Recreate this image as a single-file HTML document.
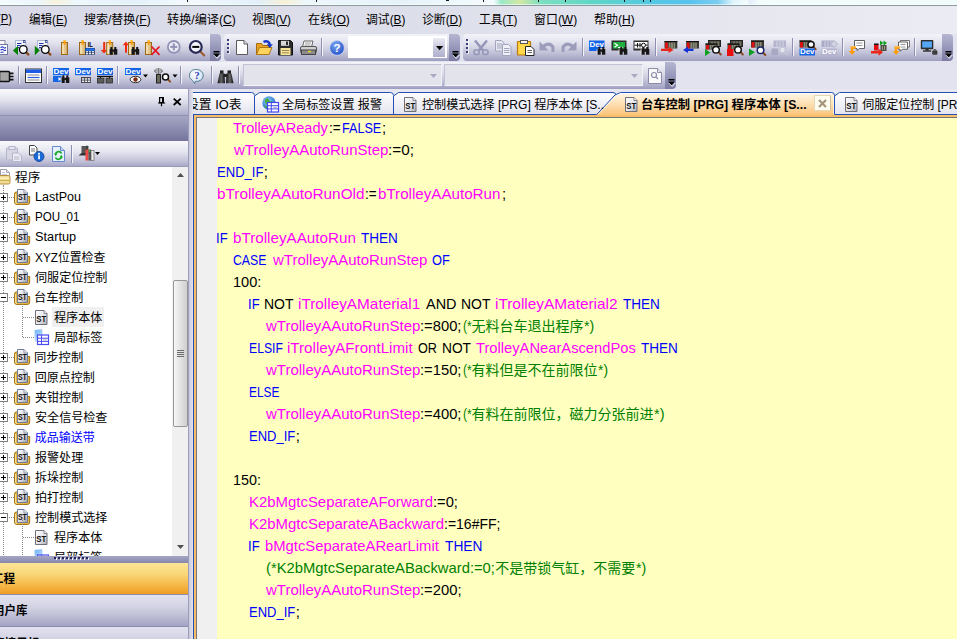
<!DOCTYPE html>
<html lang="zh-CN"><head><meta charset="utf-8"><title>GX Works2</title><style>
*{box-sizing:border-box}
html,body{margin:0;padding:0}
body{width:957px;height:639px;overflow:hidden;position:relative;background:#e3e3ef;font-family:"Liberation Sans","Noto Sans CJK SC",sans-serif;font-size:12px;color:#000}
.a{position:absolute}
.f,.t{position:absolute;white-space:pre;transform-origin:0 50%}
.t{line-height:22px;height:22px}
svg{position:absolute;overflow:visible}
.tb{position:absolute;height:27px;background:linear-gradient(#f3f3f9 0%,#e4e4ef 30%,#c9c9dd 62%,#a9a9c8 92%,#9c9cbd 100%)}
.opt{position:absolute;width:11px;height:27px;border-radius:0 4px 4px 0;background:linear-gradient(#b6b6d2,#9494b8 55%,#7c7ca4)}
.sep{position:absolute;width:2px;height:18px;border-left:1px solid #8f8fb1;border-right:1px solid #f4f4fa}
.grip{position:absolute;width:2px;height:14px;background:repeating-linear-gradient(#3c3c78 0 2px,transparent 2px 4px);box-shadow:1px 1px 0 rgba(255,255,255,.7)}
.lav{background:linear-gradient(#e3e3ef 0%,#cfcfe1 45%,#a4a4c4 100%)}
.row{position:absolute;left:0;height:20px;width:172px}
.pm{position:absolute;width:9px;height:9px;border:1px solid #808080;background:#fff}
.pm:before{content:"";position:absolute;left:1px;top:3px;width:5px;height:1px;background:#000}
.pm.p:after{content:"";position:absolute;left:3px;top:1px;width:1px;height:5px;background:#000}
.hd{position:absolute;height:0;border-top:1px dotted #8a8a8a}
.vd{position:absolute;width:0;border-left:1px dotted #8a8a8a}
</style></head><body>
<svg width="0" height="0" style="left:0;top:0"><defs><radialGradient id="hg" cx="0.4" cy="0.3" r="0.8"><stop offset="0" stop-color="#7aa6f2"/><stop offset="1" stop-color="#1a48c0"/></radialGradient><radialGradient id="hb" cx="0.4" cy="0.35" r="0.75"><stop offset="0" stop-color="#fff"/><stop offset="0.7" stop-color="#d6e6f8"/><stop offset="1" stop-color="#8fb0dc"/></radialGradient><linearGradient id="bg1" x1="0" x2="1"><stop offset="0" stop-color="#111"/><stop offset="0.5" stop-color="#666"/><stop offset="1" stop-color="#111"/></linearGradient><linearGradient id="sp" x1="0" y1="0" x2="1" y2="1"><stop offset="0" stop-color="#fff"/><stop offset="0.55" stop-color="#dedee4"/><stop offset="1" stop-color="#9c9ca6"/></linearGradient><linearGradient id="sd" x1="0" y1="0" x2="1" y2="1"><stop offset="0" stop-color="#fff"/><stop offset="0.6" stop-color="#e2e2e6"/><stop offset="1" stop-color="#a8a8b0"/></linearGradient><linearGradient id="lb" x1="0" y1="0" x2="0.600" y2="1"><stop offset="0" stop-color="#62b0f8"/><stop offset="1" stop-color="#cfe4fb"/></linearGradient><linearGradient id="tg" x1="0" y1="0" x2="0" y2="1"><stop offset="0" stop-color="#fefeff"/><stop offset="1" stop-color="#e4e4ef"/></linearGradient><linearGradient id="og" x1="0" y1="0" x2="0" y2="1"><stop offset="0" stop-color="#fff8ea"/><stop offset="0.45" stop-color="#fde0b4"/><stop offset="1" stop-color="#fbbf70"/></linearGradient><radialGradient id="gl" cx="0.4" cy="0.35" r="0.7"><stop offset="0" stop-color="#8fd0f8"/><stop offset="1" stop-color="#1a60c8"/></radialGradient></defs></svg>
<div class="a" style="left:0;top:0;width:957px;height:5px;background:linear-gradient(90deg,#f4fbfd 0,#ecf6fb 4%,#f6f2dc 5.800%,#eef7fc 8%,#e4f1fa 14%,#f3fafd 20%,#e2effa 27%,#f7f1d6 29.800%,#edf7fc 32%,#e6f2fa 42%,#f4fbfd 51.600%,#9be8c8 52.400%,#d3e8a4 54.300%,#7ddfc2 56.500%,#60d6c6 62%,#54c8e2 68%,#58c2ec 72%,#7acdf0 75%,#dff4fb 76.600%,#f2fcfc 78%,#e6ecf8 78.400%,#f1fcfc 79.200%,#f0fbfb 100%)"></div>
<div class="a" style="left:0;top:4px;width:957px;height:1px;background:rgba(255,255,255,.55)"></div>
<div class="a" style="left:187px;top:0;width:1.3px;height:1.5px;background:#10181c"></div>
<div class="a" style="left:316px;top:0;width:1.3px;height:2px;background:#10181c"></div>
<div class="a" style="left:445.5px;top:0;width:3px;height:1.3px;background:#10181c"></div>
<div class="a" style="left:483px;top:0;width:1.3px;height:2px;background:#10181c"></div>
<div class="a" style="left:538px;top:0;width:1.3px;height:2px;background:#10181c"></div>
<div class="a" style="left:565px;top:0;width:1.3px;height:2px;background:#10181c"></div>
<div class="a" style="left:624px;top:0;width:1.3px;height:2px;background:#10181c"></div>
<div class="a" style="left:643px;top:0;width:1.3px;height:2px;background:#10181c"></div>
<div class="a" style="left:650px;top:0;width:1.3px;height:2px;background:#10181c"></div>
<div class="a" style="left:0;top:5px;width:957px;height:1px;background:#8b9c9f"></div>
<div class="a" style="left:0;top:6px;width:957px;height:28px;background:linear-gradient(90deg,#dadae8 0%,#dddfea 45%,#e6e6f0 72%,#ebebf3 100%)"></div>
<span class="f" style="left:-2.60px;top:10.40px;font-size:12px;line-height:18px;color:#000;transform:scaleX(0.9375);">(<u>P</u>)</span>
<span class="f" style="left:29.30px;top:11.00px;font-size:12px;line-height:18px;color:#000;transform:scaleX(0.9600);">编辑(<u>E</u>)</span>
<span class="f" style="left:84.00px;top:11.00px;font-size:12px;line-height:18px;color:#000;">搜索/替换(<u>F</u>)</span>
<span class="f" style="left:166.70px;top:11.00px;font-size:12px;line-height:18px;color:#000;transform:scaleX(1.0133);">转换/编译(<u>C</u>)</span>
<span class="f" style="left:252.00px;top:11.00px;font-size:12px;line-height:18px;color:#000;transform:scaleX(0.9750);">视图(<u>V</u>)</span>
<span class="f" style="left:307.70px;top:11.00px;font-size:12px;line-height:18px;color:#000;transform:scaleX(1.0138);">在线(<u>O</u>)</span>
<span class="f" style="left:366.10px;top:11.00px;font-size:12px;line-height:18px;color:#000;transform:scaleX(0.9850);">调试(<u>B</u>)</span>
<span class="f" style="left:422.30px;top:11.00px;font-size:12px;line-height:18px;color:#000;transform:scaleX(0.9862);">诊断(<u>D</u>)</span>
<span class="f" style="left:479.30px;top:11.00px;font-size:12px;line-height:18px;color:#000;transform:scaleX(0.9739);">工具(<u>T</u>)</span>
<span class="f" style="left:534.40px;top:11.00px;font-size:12px;line-height:18px;color:#000;transform:scaleX(0.9949);">窗口(<u>W</u>)</span>
<span class="f" style="left:594.00px;top:11.00px;font-size:12px;line-height:18px;color:#000;">帮助(<u>H</u>)</span>
<div class="tb" style="left:0;top:34px;width:211px"></div>
<div class="opt" style="left:210px;top:34px"></div><svg style="left:212.5px;top:50px" width="8" height="9"><path d="M1.200 5.200l3 3.200l3.300-3.600" fill="none" stroke="#fff" stroke-width="1"/><rect x="0.500" y="1" width="6" height="1.500" fill="#000"/><path d="M0 3.600h7l-3.500 3.600z" fill="#000"/></svg>
<div class="tb" style="left:224px;top:34px;width:226px;border-radius:4px 0 0 4px"></div>
<div class="opt" style="left:449px;top:34px"></div><svg style="left:451.5px;top:50px" width="8" height="9"><path d="M1.200 5.200l3 3.200l3.300-3.600" fill="none" stroke="#fff" stroke-width="1"/><rect x="0.500" y="1" width="6" height="1.500" fill="#000"/><path d="M0 3.600h7l-3.500 3.600z" fill="#000"/></svg>
<div class="tb" style="left:463px;top:34px;width:480px;border-radius:4px 0 0 4px"></div>
<div class="opt" style="left:942px;top:34px"></div><svg style="left:944.5px;top:50px" width="8" height="9"><path d="M1.200 5.200l3 3.200l3.300-3.600" fill="none" stroke="#fff" stroke-width="1"/><rect x="0.500" y="1" width="6" height="1.500" fill="#000"/><path d="M0 3.600h7l-3.500 3.600z" fill="#000"/></svg>
<div class="grip" style="left:227px;top:39px"></div><div class="grip" style="left:466px;top:39px"></div>
<svg style="left:-8px;top:40px" width="16" height="16" viewBox="0 0 16 16" ><rect x="5.500" y="0.500" width="7.500" height="9" fill="#f8f8fc" stroke="#8a8aa0"/><rect x="7" y="4.500" width="8.500" height="10" fill="#fff" stroke="#7078a0"/><path d="M8.500 7.500q2-1.200 3 0t2.500 0M8.500 10q2-1.200 3 0t2.500 0M8.500 12.500q2-1 3 0" fill="none" stroke="#2838c8" stroke-width="1.100"/></svg>
<svg style="left:12px;top:40px" width="17" height="16" viewBox="0 0 17 16" ><path d="M3.500 0.500h8l2.300 2.300v5.700h-10.300z" fill="#f3f6fc" stroke="#a4aec8" stroke-width="0.900"/><rect x="11" y="0" width="2.500" height="3" fill="#3a4a8c"/><rect x="11.600" y="1" width="1.200" height="1.300" fill="#cfd8f0"/><rect x="5" y="3" width="4.500" height="1" fill="#2030a8"/><rect x="5" y="5" width="3.500" height="1" fill="#2030a8"/><rect x="5" y="7" width="2.500" height="1" fill="#2030a8"/><path d="M1 10.500l5-4.700v9.400z" fill="#008000"/><path d="M14 12.300l2.400 2.300" stroke="#8a4614" stroke-width="2.200" stroke-linecap="round"/><circle cx="11.300" cy="9.500" r="3.800" fill="#fff" stroke="#000" stroke-width="1.300"/></svg>
<svg style="left:34px;top:40px" width="17" height="16" viewBox="0 0 17 16" ><path d="M3.500 0.500h8l2.300 2.300v5.700h-10.300z" fill="#f3f6fc" stroke="#a4aec8" stroke-width="0.900"/><rect x="11" y="0" width="2.500" height="3" fill="#3a4a8c"/><rect x="11.600" y="1" width="1.200" height="1.300" fill="#cfd8f0"/><rect x="5" y="3" width="4.500" height="1" fill="#2030a8"/><rect x="5" y="5" width="3.500" height="1" fill="#2030a8"/><rect x="5" y="7" width="2.500" height="1" fill="#2030a8"/><path d="M5.800 10.500l-5-4.700v9.400z" fill="#008000"/><path d="M14 12.300l2.400 2.300" stroke="#8a4614" stroke-width="2.200" stroke-linecap="round"/><circle cx="11.300" cy="9.500" r="3.800" fill="#fff" stroke="#000" stroke-width="1.300"/></svg>
<svg style="left:60px;top:40px" width="8" height="16" viewBox="0 0 8 16" ><rect x="1.500" y="2.500" width="6" height="12" fill="#e4c88e" stroke="#9c6a16"/><rect x="2.200" y="3.200" width="1.600" height="10.600" fill="#f4e2b6"/><rect x="5.800" y="3.200" width="1" height="10.600" fill="#d0ac68"/><rect x="3.600" y="0" width="2" height="4.800" fill="#ff9a10"/><rect x="3.600" y="0" width="2" height="1.500" fill="#ffc428"/></svg>
<svg style="left:78px;top:40px" width="17" height="16" viewBox="0 0 17 16" ><rect x="1.500" y="2.500" width="6" height="12" fill="#e4c88e" stroke="#9c6a16"/><rect x="2.200" y="3.200" width="1.600" height="10.600" fill="#f4e2b6"/><rect x="5.800" y="3.200" width="1" height="10.600" fill="#d0ac68"/><rect x="3.600" y="0" width="2" height="4.800" fill="#ff9a10"/><rect x="3.600" y="0" width="2" height="1.500" fill="#ffc428"/><text x="12.300" y="6.800" text-anchor="middle" font-family="Liberation Sans,sans-serif" font-weight="bold" font-size="6.500" fill="#000" textLength="5.200" lengthAdjust="spacingAndGlyphs">IL</text><rect x="7" y="8" width="9.800" height="6.800" fill="#1e345c"/><rect x="7.500" y="8.400" width="8.800" height="2.400" fill="#1e74f4"/><rect x="7.800" y="11.200" width="2.200" height="1.200" fill="#fff"/><rect x="10.800" y="11.200" width="2.200" height="1.200" fill="#fff"/><rect x="13.800" y="11.200" width="2.200" height="1.200" fill="#fff"/><rect x="7.800" y="13.100" width="2.200" height="1.200" fill="#fff"/><rect x="10.800" y="13.100" width="2.200" height="1.200" fill="#fff"/><rect x="13.800" y="13.100" width="2.200" height="1.200" fill="#fff"/></svg>
<svg style="left:100px;top:40px" width="18" height="16" viewBox="0 0 18 16" ><rect x="3.200" y="2" width="2" height="9" fill="#f02c0c"/><path d="M0.800 10h6.400l-3.200 3.600z" fill="#f02c0c"/><g transform="translate(5.2 0)"><rect x="1.500" y="2.500" width="6" height="12" fill="#e4c88e" stroke="#9c6a16"/><rect x="2.200" y="3.200" width="1.600" height="10.600" fill="#f4e2b6"/><rect x="5.800" y="3.200" width="1" height="10.600" fill="#d0ac68"/><rect x="3.600" y="0" width="2" height="4.800" fill="#ff9a10"/><rect x="3.600" y="0" width="2" height="1.500" fill="#ffc428"/></g><g transform="translate(9.3 7)"><rect x="1" y="0" width="2" height="2.500" fill="#161616"/><rect x="5" y="0" width="2" height="2.500" fill="#161616"/><rect x="0" y="2" width="3.400" height="5.700" fill="#161616"/><rect x="4.600" y="2" width="3.400" height="5.700" fill="#161616"/><rect x="3" y="2.600" width="2" height="2.200" fill="#161616"/><rect x="-0.600" y="2" width="0.700" height="5.700" fill="#f4f0e4"/></g></svg>
<svg style="left:122px;top:40px" width="18" height="16" viewBox="0 0 18 16" ><rect x="3" y="4.500" width="2" height="8.200" fill="#f02c0c"/><path d="M0.800 5.200h6.200l-3.100-3.600z" fill="#f02c0c"/><g transform="translate(5 0)"><rect x="1.500" y="2.500" width="6" height="12" fill="#e4c88e" stroke="#9c6a16"/><rect x="2.200" y="3.200" width="1.600" height="10.600" fill="#f4e2b6"/><rect x="5.800" y="3.200" width="1" height="10.600" fill="#d0ac68"/><rect x="3.600" y="0" width="2" height="4.800" fill="#ff9a10"/><rect x="3.600" y="0" width="2" height="1.500" fill="#ffc428"/></g><g transform="translate(9.2 7)"><rect x="1" y="0" width="2" height="2.500" fill="#161616"/><rect x="5" y="0" width="2" height="2.500" fill="#161616"/><rect x="0" y="2" width="3.400" height="5.700" fill="#161616"/><rect x="4.600" y="2" width="3.400" height="5.700" fill="#161616"/><rect x="3" y="2.600" width="2" height="2.200" fill="#161616"/><rect x="-0.600" y="2" width="0.700" height="5.700" fill="#f4f0e4"/></g></svg>
<svg style="left:144px;top:40px" width="17" height="16" viewBox="0 0 17 16" ><rect x="1.500" y="2.500" width="6" height="12" fill="#e4c88e" stroke="#9c6a16"/><rect x="2.200" y="3.200" width="1.600" height="10.600" fill="#f4e2b6"/><rect x="5.800" y="3.200" width="1" height="10.600" fill="#d0ac68"/><rect x="3.600" y="0" width="2" height="4.800" fill="#ff9a10"/><rect x="3.600" y="0" width="2" height="1.500" fill="#ffc428"/><path d="M7.500 6.500l8 8.300M15.500 6.500l-8 8.300" stroke="#e6141e" stroke-width="1.700"/></svg>
<svg style="left:166px;top:40px" width="17" height="16" viewBox="0 0 17 16" ><path d="M12.300 11.500l4 4" stroke="#b8b8cc" stroke-width="2" stroke-linecap="round"/><circle cx="7.800" cy="6.900" r="5.900" fill="#ececf5" stroke="#9292b6" stroke-width="1.8"/><path d="M4.300 6.900h7" stroke="#9292b6" stroke-width="2"/><path d="M7.800 3.400v7" stroke="#9292b6" stroke-width="2"/></svg>
<svg style="left:188px;top:40px" width="17" height="16" viewBox="0 0 17 16" ><path d="M12.300 11.500l4 4" stroke="#9a5a28" stroke-width="2" stroke-linecap="round"/><circle cx="7.800" cy="6.900" r="5.900" fill="#f2f2f9" stroke="#2a2a58" stroke-width="2.2"/><path d="M4.300 6.900h7" stroke="#000" stroke-width="2"/></svg>
<svg style="left:236px;top:40px" width="13" height="16" viewBox="0 0 13 16" ><path d="M0.500 0.500h7.500l3.500 3.500v10.500h-11z" fill="#fff" stroke="#5a5a5a"/><path d="M8 0.500v3.500h3.500" fill="#ececec" stroke="#5a5a5a"/></svg>
<svg style="left:256px;top:40px" width="17" height="16" viewBox="0 0 17 16" ><path d="M0.5 14.5v-11h5l1.5 2h6v9z" fill="#e8a020" stroke="#a86c10"/><path d="M0.5 14.5l3-7h12.5l-3 7z" fill="#ffd45c" stroke="#b07810"/><path d="M7.500 1.800q5.500-2 6.300 3" fill="none" stroke="#1438c4" stroke-width="2.500"/><path d="M10.800 4.300h6l-3 3.700z" fill="#1438c4"/></svg>
<svg style="left:278px;top:40px" width="15" height="16" viewBox="0 0 15 16" ><path d="M0.5 0.5h12l2 2v12.5h-14z" fill="#2c2c2c" stroke="#111"/><rect x="3" y="0.8" width="8" height="5" fill="#d8d8d8"/><rect x="8" y="1.5" width="2" height="3.5" fill="#2c2c2c"/><rect x="2.5" y="8" width="10" height="7" fill="#f6e49a"/><path d="M4 10.5h7M4 12.8h7" stroke="#9a8a50"/></svg>
<svg style="left:300px;top:40px" width="17" height="16" viewBox="0 0 17 16" ><path d="M4 1h9l-1.5 6h-9z" fill="#fff" stroke="#666"/><path d="M5 3h6M4.5 5h6" stroke="#999"/><rect x="0.5" y="6.5" width="16" height="6.5" rx="1.5" fill="#cfcfcf" stroke="#555"/><rect x="1.5" y="10" width="14" height="4.5" fill="#8c8c8c" stroke="#444"/><rect x="8" y="10.8" width="3" height="1.4" fill="#f0e020"/></svg>
<div class="sep" style="left:321px;top:38px"></div>
<svg style="left:329px;top:40px" width="16" height="16" viewBox="0 0 16 16" ><circle cx="8" cy="8" r="7.4" fill="url(#hg)" stroke="#c9d6f2" stroke-width="1"/><text x="8" y="12.2" text-anchor="middle" font-family="Liberation Sans,sans-serif" font-weight="bold" font-size="11.5" fill="#fff">?</text></svg>
<div class="a" style="left:348px;top:36px;width:98.500px;height:22px;background:#fff"></div>
<div class="a" style="left:433px;top:37.5px;width:12px;height:19.500px;background:linear-gradient(#ececf4,#c8c8de 50%,#b0b0ce)"></div>
<svg style="left:436px;top:45.5px" width="7" height="5"><path d="M0 0h7.200l-3.600 4.300z" fill="#000"/></svg>
<svg style="left:472.5px;top:40px" width="16" height="16" viewBox="0 0 16 16" ><path d="M2 0.5l8.5 10.5M14 0.5l-8.5 10.5" stroke="#9696b8" stroke-width="2.500"/><rect x="1" y="10" width="5.2" height="4.5" rx="1.6" fill="none" stroke="#9696b8" stroke-width="1.6"/><rect x="9.8" y="10" width="5.2" height="4.5" rx="1.6" fill="none" stroke="#9696b8" stroke-width="1.6"/></svg>
<svg style="left:495px;top:40px" width="17" height="16" viewBox="0 0 17 16" ><path d="M0.5 0.5h6l2.5 2.5v8h-8.500z" fill="#e8e8f2" stroke="#a4a4c0"/><path d="M2 4h5M2 6h5M2 8h5" stroke="#a4a4c0"/><path d="M7.5 4.500h6l2.500 2.500v8.500h-8.500z" fill="#f0f0f7" stroke="#a4a4c0"/><path d="M9 8.500h5.500M9 10.500h5.500M9 12.500h5.500" stroke="#a4a4c0"/></svg>
<svg style="left:517px;top:40px" width="18" height="16" viewBox="0 0 18 16" ><rect x="0.5" y="1.500" width="13" height="13.500" rx="0.500" fill="#ffc830" stroke="#b87a0c" stroke-width="1.200"/><rect x="1.500" y="2.500" width="11" height="11.500" fill="#ffd84c"/><rect x="3.500" y="0.5" width="7" height="3" fill="#f4f4f4" stroke="#555"/><path d="M8.500 6.500h5.500l3 3v6h-8.500z" fill="#fff" stroke="#222"/><path d="M10.500 10.500h4.500M10.500 12.500h4.500" stroke="#555" stroke-width="0.900"/></svg>
<svg style="left:539px;top:40px" width="17" height="16" viewBox="0 0 17 16" ><path d="M0.5 1.500v9h9l-3.300-3.300q3.500-3 6.200 0.300v4.500h3.100v-5.500q-4.500-7-11.700-1.700z" fill="#9d9dbb"/></svg>
<svg style="left:560px;top:40px" width="17" height="16" viewBox="0 0 17 16" ><g transform="translate(17 0) scale(-1 1)"><path d="M0.5 1.500v9h9l-3.300-3.300q3.500-3 6.200 0.300v4.500h3.100v-5.500q-4.500-7-11.700-1.700z" fill="#9d9dbb"/></g></svg>
<div class="sep" style="left:582px;top:38px"></div>
<svg style="left:589px;top:40px" width="18" height="16" viewBox="0 0 18 16" ><rect x="0" y="0.5" width="15.5" height="7.5" fill="#1464e6"/><text x="7.75" y="6.8" font-family="Liberation Sans,sans-serif" font-weight="bold" font-size="7" text-anchor="middle" fill="#fff" textLength="14.5" lengthAdjust="spacingAndGlyphs">Dev</text><rect x="0" y="8" width="9" height="3" fill="#1464e6"/><g transform="translate(8.3 7)"><rect x="1" y="0" width="2" height="2.500" fill="#161616"/><rect x="5" y="0" width="2" height="2.500" fill="#161616"/><rect x="0" y="2" width="3.400" height="5.700" fill="#161616"/><rect x="4.600" y="2" width="3.400" height="5.700" fill="#161616"/><rect x="3" y="2.600" width="2" height="2.200" fill="#161616"/><rect x="-0.600" y="2" width="0.700" height="5.700" fill="#f4f0e4"/></g></svg>
<svg style="left:611px;top:40px" width="18" height="16" viewBox="0 0 18 16" ><rect x="0.5" y="0.5" width="15" height="10" fill="#2e2e2e"/><rect x="2" y="2" width="12" height="6.500" fill="#20b040"/><path d="M3.500 3.300l3 2l-3 2" fill="none" stroke="#fff" stroke-width="1.200"/><path d="M7 7.500h5" stroke="#fff" stroke-width="1.200"/><g transform="translate(8.3 7)"><rect x="1" y="0" width="2" height="2.500" fill="#161616"/><rect x="5" y="0" width="2" height="2.500" fill="#161616"/><rect x="0" y="2" width="3.400" height="5.700" fill="#161616"/><rect x="4.600" y="2" width="3.400" height="5.700" fill="#161616"/><rect x="3" y="2.600" width="2" height="2.200" fill="#161616"/><rect x="-0.600" y="2" width="0.700" height="5.700" fill="#f4f0e4"/></g></svg>
<svg style="left:633px;top:40px" width="18" height="16" viewBox="0 0 18 16" ><rect x="0.5" y="0.5" width="15" height="10" fill="#2e2e2e"/><rect x="1.500" y="2" width="13" height="6.500" fill="#fff"/><path d="M1.500 5.200h13M4.500 3v4.500M7 3v4.500" stroke="#111" stroke-width="1"/><circle cx="10.500" cy="5.200" r="2" fill="#fff" stroke="#111"/><g transform="translate(8.3 7)"><rect x="1" y="0" width="2" height="2.500" fill="#161616"/><rect x="5" y="0" width="2" height="2.500" fill="#161616"/><rect x="0" y="2" width="3.400" height="5.700" fill="#161616"/><rect x="4.600" y="2" width="3.400" height="5.700" fill="#161616"/><rect x="3" y="2.600" width="2" height="2.200" fill="#161616"/><rect x="-0.600" y="2" width="0.700" height="5.700" fill="#f4f0e4"/></g></svg>
<div class="sep" style="left:655px;top:38px"></div>
<svg style="left:662px;top:40px" width="17" height="16" viewBox="0 0 17 16" ><rect x="2.5" y="1" width="12.8" height="7.5" fill="#3c3c34"/><rect x="2.5" y="1" width="12.8" height="1.2" fill="#111"/><rect x="3.1" y="2.5" width="2.8" height="6.0" fill="#e01010"/><rect x="6.7" y="2.5" width="1.8" height="5.7" fill="#8a8a78"/><rect x="9.1" y="2.5" width="1.8" height="5.7" fill="#8a8a78"/><rect x="11.5" y="2.5" width="1.6" height="5.7" fill="#8a8a78"/><path d="M-1 8.700h7.500v-2l5 3.200l-5 3.200v-2h-7.500z" fill="#e8281a"/></svg>
<svg style="left:684px;top:40px" width="17" height="16" viewBox="0 0 17 16" ><rect x="2.2" y="1" width="12.8" height="7.5" fill="#3c3c34"/><rect x="2.2" y="1" width="12.8" height="1.2" fill="#111"/><rect x="2.8000000000000003" y="2.5" width="2.8" height="6.0" fill="#e01010"/><rect x="6.4" y="2.5" width="1.8" height="5.7" fill="#8a8a78"/><rect x="8.8" y="2.5" width="1.8" height="5.7" fill="#8a8a78"/><rect x="11.2" y="2.5" width="1.6" height="5.7" fill="#8a8a78"/><path d="M9.500 8.700h-5.500v-2l-5 3.200l5 3.200v-2h5.500z" fill="#1432d8"/></svg>
<svg style="left:705px;top:40px" width="17" height="16" viewBox="0 0 17 16" ><rect x="3.500" y="0.5" width="12" height="6" fill="#4a4a40" stroke="#222"/><path d="M7 1.500v4.500M10 1.500v4.500M13 1.500v4.500" stroke="#9a9a88"/><rect x="0.5" y="3.5" width="12" height="6" fill="#3c3c34"/><rect x="0.5" y="3.5" width="12" height="1.2" fill="#111"/><rect x="1.1" y="5.0" width="2.8" height="4.5" fill="#e01010"/><rect x="4.7" y="5.0" width="1.8" height="4.2" fill="#8a8a78"/><rect x="7.1" y="5.0" width="1.8" height="4.2" fill="#8a8a78"/><rect x="9.5" y="5.0" width="1.6" height="4.2" fill="#8a8a78"/><path d="M0 9l5.500 3.500l-5.500 3.500z" fill="#10a020"/><path d="M13.309999999999999 12.009999999999998l2.5 2.5" stroke="#8a4a1c" stroke-width="2" stroke-linecap="round"/><circle cx="11" cy="9.7" r="3.3" fill="#fff" stroke="#101010" stroke-width="1.5"/></svg>
<svg style="left:727px;top:40px" width="17" height="16" viewBox="0 0 17 16" ><rect x="3.500" y="0.5" width="12" height="6" fill="#4a4a40" stroke="#222"/><path d="M7 1.500v4.500M10 1.500v4.500M13 1.500v4.500" stroke="#9a9a88"/><rect x="0.5" y="3.5" width="12" height="6" fill="#3c3c34"/><rect x="0.5" y="3.5" width="12" height="1.2" fill="#111"/><rect x="1.1" y="5.0" width="2.8" height="4.5" fill="#e01010"/><rect x="4.7" y="5.0" width="1.8" height="4.2" fill="#8a8a78"/><rect x="7.1" y="5.0" width="1.8" height="4.2" fill="#8a8a78"/><rect x="9.5" y="5.0" width="1.6" height="4.2" fill="#8a8a78"/><rect x="0" y="9" width="6.500" height="7" fill="#e81010"/><path d="M13.309999999999999 12.009999999999998l2.5 2.5" stroke="#8a4a1c" stroke-width="2" stroke-linecap="round"/><circle cx="11" cy="9.7" r="3.3" fill="#fff" stroke="#101010" stroke-width="1.5"/></svg>
<svg style="left:749px;top:40px" width="17" height="16" viewBox="0 0 17 16" ><rect x="2" y="0.5" width="13" height="7" fill="#3c3c34"/><rect x="2" y="0.5" width="13" height="1.2" fill="#111"/><rect x="2.6" y="2.0" width="2.8" height="5.5" fill="#e01010"/><rect x="6.2" y="2.0" width="1.8" height="5.2" fill="#8a8a78"/><rect x="8.6" y="2.0" width="1.8" height="5.2" fill="#8a8a78"/><rect x="11" y="2.0" width="1.6" height="5.2" fill="#8a8a78"/><path d="M0 8.500l6 3.700l-6 3.800z" fill="#10a020"/><path d="M13.809999999999999 12.509999999999998l2.5 2.5" stroke="#8a4a1c" stroke-width="2" stroke-linecap="round"/><circle cx="11.5" cy="10.2" r="3.3" fill="#fff" stroke="#1a2868" stroke-width="1.5"/></svg>
<svg style="left:771px;top:40px" width="17" height="16" viewBox="0 0 17 16" ><rect x="2.500" y="0.5" width="12.500" height="6.500" fill="#b4b4cc"/><path d="M6 1v6M9 1v6M12 1v6" stroke="#d8d8e6"/><rect x="0.5" y="8.500" width="6.500" height="6.500" fill="#a8a8c2"/><path d="M13.6 12.1l2.5 2.5" stroke="#c4c4d6" stroke-width="2" stroke-linecap="round"/><circle cx="11.5" cy="10" r="3" fill="#e6e6f0" stroke="#c4c4d6" stroke-width="1.5"/></svg>
<div class="sep" style="left:792px;top:38px"></div>
<svg style="left:799px;top:40px" width="17" height="16" viewBox="0 0 17 16" ><rect x="0.5" y="0.5" width="12" height="7" fill="#3c3c34"/><rect x="0.5" y="0.5" width="12" height="1.2" fill="#111"/><rect x="1.1" y="2.0" width="2.8" height="5.5" fill="#e01010"/><rect x="4.7" y="2.0" width="1.8" height="5.2" fill="#8a8a78"/><rect x="7.1" y="2.0" width="1.8" height="5.2" fill="#8a8a78"/><rect x="9.5" y="2.0" width="1.6" height="5.2" fill="#8a8a78"/><path d="M14.17 6.67l2.5 2.5" stroke="#8a4a1c" stroke-width="2" stroke-linecap="round"/><circle cx="12" cy="4.5" r="3.1" fill="#fff" stroke="#101010" stroke-width="1.5"/><rect x="0.5" y="8.5" width="15.5" height="7" fill="#1464e6"/><text x="8.25" y="14.3" font-family="Liberation Sans,sans-serif" font-weight="bold" font-size="7" text-anchor="middle" fill="#fff" textLength="14.5" lengthAdjust="spacingAndGlyphs">Dev</text></svg>
<svg style="left:821px;top:40px" width="17" height="16" viewBox="0 0 17 16" ><rect x="0.500" y="0.500" width="12" height="6.500" fill="#acacc8"/><path d="M4 1v6M7 1v6M10 1v6" stroke="#d0d0e0"/><path d="M9.500 4l3.500-3.500l3.500 3.500l-3.500 3.500z" fill="#d4d4e2" stroke="#b0b0ca"/><rect x="0.5" y="8.5" width="15.5" height="7" fill="#b2b2ce"/><text x="8.25" y="14.3" font-family="Liberation Sans,sans-serif" font-weight="bold" font-size="7" text-anchor="middle" fill="#fff" textLength="14.5" lengthAdjust="spacingAndGlyphs">Dev</text></svg>
<div class="sep" style="left:842px;top:38px"></div>
<svg style="left:849px;top:40px" width="17" height="16" viewBox="0 0 17 16" ><path d="M5.500 0.5h10v8.0h-5l-2.500 2v-2h-2.5z" fill="#fff" stroke="#505050" stroke-width="0.900"/><path d="M7.500 3h6M7.500 5.5h6" stroke="#8a8a8a" stroke-width="0.900"/><path d="M1.500 6.200h5.300v2.600h-2.600v2.300h2.200l-3.300 3.800l-3.300-3.800h2.200z" fill="#ff9c0c"/><path d="M2.200 6.900h3.800" stroke="#ffd060" stroke-width="0.800"/></svg>
<svg style="left:871px;top:40px" width="17" height="16" viewBox="0 0 17 16" ><rect x="3" y="4" width="4.500" height="6.500" fill="#e01010"/><rect x="3" y="3.500" width="4.500" height="1.500" fill="#111"/><rect x="9.500" y="5" width="6" height="6" fill="#4a4a40"/><path d="M11.500 6v4M13.500 6v4" stroke="#9a9a88"/><path d="M9 0.5l3.500 2.500l-3.500 2.500zM12.500 0.5l3.500 2.500l-3.500 2.500z" fill="#10a020"/><path d="M0 11h7.500v-2.300l4.500 3.500l-4.500 3.500v-2.300h-7.500z" fill="#e8281a"/></svg>
<svg style="left:893px;top:40px" width="17" height="16" viewBox="0 0 17 16" ><path d="M7.500 0.500h9v6.500h-9z" fill="#fff" stroke="#666" stroke-width="0.900"/><path d="M5.500 2.0h9v7.25h-5l-2.500 2v-2h-1.5z" fill="#fff" stroke="#505050" stroke-width="0.900"/><path d="M7.500 4.5h5M7.500 7.0h5" stroke="#8a8a8a" stroke-width="0.900"/><path d="M1.500 6.200h5.300v2.600h-2.600v2.300h2.200l-3.300 3.800l-3.300-3.800h2.200z" fill="#ff9c0c"/><path d="M2.200 6.900h3.800" stroke="#ffd060" stroke-width="0.800"/></svg>
<div class="sep" style="left:914px;top:38px"></div>
<svg style="left:920px;top:40px" width="19" height="16" viewBox="0 0 19 16" ><rect x="0.800" y="0" width="12.500" height="9.200" rx="0.800" fill="#2c2c2c"/><rect x="2.200" y="1.400" width="9.700" height="6.200" fill="#56a6f6"/><rect x="5.600" y="9" width="3" height="1.600" fill="#2c2c2c"/><rect x="3" y="10.300" width="8.200" height="1.400" fill="#2c2c2c"/><rect x="12.200" y="10.600" width="5.200" height="4.200" rx="1" fill="#3c3c3c"/><path d="M13.300 10.800q1.500-2.600 3 0" fill="none" stroke="#3c3c3c" stroke-width="1.100"/></svg>
<div class="tb" style="left:0;top:62px;width:666px;height:27px"></div>
<div class="opt" style="left:665px;top:62px"></div><svg style="left:667.5px;top:78px" width="8" height="9"><path d="M1.200 5.200l3 3.200l3.300-3.600" fill="none" stroke="#fff" stroke-width="1"/><rect x="0.500" y="1" width="6" height="1.500" fill="#000"/><path d="M0 3.600h7l-3.500 3.600z" fill="#000"/></svg>
<svg style="left:-1px;top:69px" width="16" height="16" viewBox="0 0 16 16" ><rect x="0.500" y="2.500" width="10" height="10" rx="1" fill="#a6a6a6" stroke="#111" stroke-width="1.500"/><path d="M11 4.300h3.500M11 7.500h3.500M11 10.700h3.500" stroke="#111" stroke-width="1.700"/></svg>
<div class="sep" style="left:18px;top:66px"></div>
<svg style="left:25px;top:68px" width="17" height="16" viewBox="0 0 17 16" ><rect x="0.5" y="1" width="16" height="13.500" fill="#fff" stroke="#333"/><rect x="1" y="1.500" width="15" height="3.500" fill="#1c5ce8"/><path d="M2.500 7h12M2.500 12h12" stroke="#888" stroke-width="1"/><path d="M2.500 9.500h12" stroke="#2a5ce0" stroke-width="1.200"/></svg>
<div class="sep" style="left:46px;top:66px"></div>
<svg style="left:53px;top:68px" width="17" height="16" viewBox="0 0 17 16" ><rect x="0" y="0" width="16" height="7.2" fill="#1464e6"/><text x="8.0" y="6.0" font-family="Liberation Sans,sans-serif" font-weight="bold" font-size="7" text-anchor="middle" fill="#fff" textLength="15" lengthAdjust="spacingAndGlyphs">Dev</text><rect x="0" y="8" width="8.500" height="6" fill="#1464e6"/><path d="M5.500 9l2.800 2l-2.800 2z" fill="#fff"/><g transform="translate(8.3 7.3)"><rect x="1" y="0" width="2" height="2.500" fill="#161616"/><rect x="5" y="0" width="2" height="2.500" fill="#161616"/><rect x="0" y="2" width="3.400" height="5.700" fill="#161616"/><rect x="4.600" y="2" width="3.400" height="5.700" fill="#161616"/><rect x="3" y="2.600" width="2" height="2.200" fill="#161616"/><rect x="-0.600" y="2" width="0.700" height="5.700" fill="#f4f0e4"/></g></svg>
<svg style="left:75px;top:68px" width="17" height="16" viewBox="0 0 17 16" ><rect x="0" y="0" width="16" height="7.2" fill="#1464e6"/><text x="8.0" y="6.0" font-family="Liberation Sans,sans-serif" font-weight="bold" font-size="7" text-anchor="middle" fill="#fff" textLength="15" lengthAdjust="spacingAndGlyphs">Dev</text><rect x="6" y="9" width="10" height="6" fill="#484854"/><rect x="7" y="10.300" width="2.200" height="1.300" fill="#fff"/><rect x="10" y="10.300" width="2.200" height="1.300" fill="#fff"/><rect x="13" y="10.300" width="2.200" height="1.300" fill="#fff"/><rect x="7" y="12.600" width="2.200" height="1.300" fill="#fff"/><rect x="10" y="12.600" width="2.200" height="1.300" fill="#fff"/><rect x="13" y="12.600" width="2.200" height="1.300" fill="#fff"/></svg>
<svg style="left:97px;top:68px" width="17" height="16" viewBox="0 0 17 16" ><rect x="0" y="0" width="16" height="7.2" fill="#1464e6"/><text x="8.0" y="6.0" font-family="Liberation Sans,sans-serif" font-weight="bold" font-size="7" text-anchor="middle" fill="#fff" textLength="15" lengthAdjust="spacingAndGlyphs">Dev</text><path d="M0 8.500h16" stroke="#111" stroke-width="1.300"/><path d="M3.500 8.500v2M12.500 8.500v2" stroke="#111" stroke-width="1.200"/><rect x="0.500" y="10.200" width="6.500" height="4.800" fill="#5e5e5e" stroke="#2a2a2a" stroke-width="0.800"/><rect x="9" y="10.200" width="6.500" height="4.800" fill="#5e5e5e" stroke="#2a2a2a" stroke-width="0.800"/></svg>
<div class="sep" style="left:117px;top:66px"></div>
<svg style="left:125px;top:68px" width="24" height="16" viewBox="0 0 24 16" ><rect x="0" y="0" width="16" height="7" fill="#1464e6"/><text x="8.0" y="5.8" font-family="Liberation Sans,sans-serif" font-weight="bold" font-size="7" text-anchor="middle" fill="#fff" textLength="15" lengthAdjust="spacingAndGlyphs">Dev</text><ellipse cx="10.500" cy="11.500" rx="5.300" ry="3.200" fill="#fff" stroke="#222"/><circle cx="10.500" cy="11.500" r="2.200" fill="#7a2c14"/><path d="M18 6.500h5l-2.500 3z" fill="#000"/></svg>
<svg style="left:153px;top:68px" width="26" height="16" viewBox="0 0 26 16" ><ellipse cx="5.500" cy="3" rx="3.800" ry="2.200" fill="none" stroke="#666" stroke-width="0.800"/><path d="M5.500 0v7M1 3h9" stroke="#666" stroke-width="0.800"/><rect x="3.500" y="6.500" width="4" height="8.500" fill="#6a6a5c" stroke="#222"/><path d="M14.6 11.1l2.5 2.5" stroke="#8a4a1c" stroke-width="2" stroke-linecap="round"/><circle cx="12.5" cy="9" r="3" fill="#fff" stroke="#101010" stroke-width="1.5"/><path d="M19.500 6.500h5l-2.500 3z" fill="#000"/></svg>
<div class="sep" style="left:180px;top:66px"></div>
<svg style="left:189px;top:68.5px" width="16" height="15" viewBox="0 0 18 17" ><path d="M8.500 0.5a7.800 6.800 0 1 1-1.500 13.500l-0.500 2.500l-2.800-3.600a7.800 6.800 0 0 1 4.800-12.400z" fill="url(#hb)" stroke="#3a6a7c" stroke-width="0.900"/><text x="9" y="11.500" text-anchor="middle" font-family="Liberation Serif,serif" font-weight="bold" font-size="11.500" fill="#2030b0">?</text></svg>
<div class="sep" style="left:211px;top:66px"></div>
<svg style="left:217px;top:69.5px" width="17" height="14" viewBox="0 0 17 16" preserveAspectRatio="none"><rect x="3" y="0.5" width="3.500" height="5" fill="#222"/><rect x="10.500" y="0.5" width="3.500" height="5" fill="#222"/><path d="M2.500 4h5l0.500 11h-7.500z" fill="url(#bg1)"/><path d="M9.500 4h5l2 11h-7.500z" fill="url(#bg1)"/><rect x="6.500" y="4.500" width="4" height="3.500" fill="#222"/></svg>
<div class="sep" style="left:238px;top:66px"></div>
<div class="a" style="left:243px;top:64px;width:199px;height:22px;background:#e3e3ec;border:1px solid #c2c2d6;border-right-color:#f2f2f8;border-bottom-color:#f4f4fa"></div>
<svg style="left:430px;top:74px" width="7" height="4"><path d="M0 0h7l-3.5 4z" fill="#a9a9c4"/></svg>
<div class="a" style="left:444px;top:64px;width:199px;height:22px;background:#e3e3ec;border:1px solid #c2c2d6;border-right-color:#f2f2f8;border-bottom-color:#f4f4fa"></div>
<svg style="left:631px;top:74px" width="7" height="4"><path d="M0 0h7l-3.5 4z" fill="#a9a9c4"/></svg>
<svg style="left:648px;top:68px" width="15" height="16" viewBox="0 0 15 16" ><path d="M0.5 0.5h9l4 4v11h-13z" fill="#fafafc" stroke="#8c8ca8"/><path d="M9.500 0.5v4h4" fill="#e4e4ee" stroke="#8c8ca8"/><circle cx="6" cy="7" r="2.500" fill="none" stroke="#8c8ca8" stroke-width="1.200"/><path d="M8 9l2 2" stroke="#8c8ca8" stroke-width="1.300"/></svg>
<div class="a" style="left:0;top:89px;width:189px;height:27px;background:linear-gradient(#fafafd 0%,#e4e4ef 40%,#a9a9c7 100%)"></div>
<div class="a" style="left:0;top:115px;width:189px;height:1px;background:#8f8fb0"></div>
<div class="a" style="left:0;top:116px;width:189px;height:25px;background:linear-gradient(#a6a6c4 0%,#9090b4 45%,#74749c 100%)"></div>
<div class="a" style="left:0;top:141px;width:189px;height:26px;border-radius:0 0 4px 0;background:linear-gradient(#f8f8fc 0%,#e6e6f0 40%,#c4c4da 75%,#a4a4c4 100%)"></div>
<div class="a" style="left:0;top:166px;width:189px;height:1px;background:#9a9aba"></div>
<svg style="left:158px;top:97px" width="8" height="10" viewBox="0 0 8 10" ><rect x="1.600" y="0.600" width="3.800" height="5" fill="none" stroke="#000" stroke-width="1.200"/><rect x="4" y="0.600" width="1.800" height="5" fill="#000"/><path d="M0 6h7.200M3.500 6v3.200" stroke="#000" stroke-width="1.200"/></svg>
<svg style="left:173px;top:97.5px" width="9" height="8" viewBox="0 0 9 8" ><path d="M0.700 0.600l7 6.400M7.700 0.600l-7 6.400" stroke="#000" stroke-width="1.700"/></svg>
<svg style="left:6px;top:146px" width="17" height="16" viewBox="0 0 17 16" ><rect x="0.5" y="2" width="11" height="12" rx="1" fill="#d6d6e4" stroke="#b4b4ca"/><rect x="3" y="0.5" width="6" height="3" fill="#e8e8f0" stroke="#b4b4ca"/><path d="M6.500 7h6l3 3v5.500h-9z" fill="#ececf4" stroke="#b4b4ca"/><path d="M8 11h5.500M8 13h5.500" stroke="#b4b4ca"/></svg>
<svg style="left:28px;top:145px" width="17" height="17" viewBox="0 0 17 17" ><path d="M1.500 0.5h5l2.500 2.500v7h-7.500z" fill="#fff" stroke="#444"/><path d="M3 4h4M3 6h4" stroke="#777"/><circle cx="11" cy="11.500" r="5" fill="#1a6ad8" stroke="#0c3c90" stroke-width="0.800"/><circle cx="11" cy="8.800" r="1" fill="#fff"/><rect x="10.200" y="10.300" width="1.700" height="4" fill="#fff"/></svg>
<svg style="left:52px;top:146px" width="13" height="16" viewBox="0 0 13 16" ><path d="M0.500 0.500h8l4 4v11h-12z" fill="#e6f0fc" stroke="#6a8ad0"/><path d="M8.500 0.500v4h4" fill="#c4d8f4" stroke="#6a8ad0"/><path d="M9.500 7.500a3.200 3.200 0 0 0-6 0.500" fill="none" stroke="#18a828" stroke-width="1.800"/><path d="M2 7.500h3.500l-1.800 2.800z" fill="#18a828"/><path d="M3.500 11.500a3.200 3.200 0 0 0 6-0.500" fill="none" stroke="#18a828" stroke-width="1.800"/><path d="M11 11.500h-3.500l1.800-2.800z" fill="#18a828"/></svg>
<div class="sep" style="left:71px;top:145px"></div>
<svg style="left:78px;top:145px" width="17" height="17" viewBox="0 0 17 17" ><path d="M3.500 1h7v7.500h-7z" fill="#555"/><path d="M0.500 10.500l3-2.500h7l-1 2.500z" fill="#333"/><rect x="7.500" y="4.500" width="3" height="11" fill="#f04848"/><rect x="10.500" y="4.500" width="2.500" height="11" fill="#555"/><rect x="13" y="5.500" width="3" height="10" fill="#e8e8e8" stroke="#555" stroke-width="0.600"/><rect x="11" y="5.500" width="1.300" height="1.300" fill="#30e030"/><path d="M9 0.500v4" stroke="#333"/></svg>
<svg style="left:95px;top:152px" width="5" height="3"><path d="M0 0h5l-2.5 3z" fill="#000"/></svg>
<div class="a" style="left:0;top:167px;width:189px;height:389px;background:#fff;overflow:hidden" id="tree">
<div class="vd" style="left:3px;top:18px;height:380px"></div>
<svg style="left:-6px;top:1px" width="18" height="18" viewBox="0 0 18 18" ><path d="M6.500 1.500h6l3 3v7h-9z" fill="#fff" stroke="#9a9aaa"/><path d="M12.500 1.500v3h3" fill="#dcdce6" stroke="#9a9aaa" stroke-width="0.800"/><path d="M8 4.500h3M8 6.500h5" stroke="#b8bed4" stroke-width="0.900"/><rect x="2.500" y="7.500" width="13.500" height="8.500" rx="1.500" fill="#f0dc94" stroke="#b8923a"/><rect x="3.500" y="9.500" width="11.500" height="1.300" fill="#fff4c4"/><rect x="3.500" y="12" width="11.500" height="1" fill="#d0b054"/></svg>
<span class="f" style="left:15.10px;top:1.60px;font-size:12px;line-height:18px;color:#000;transform:scaleX(1.0542);">程序</span>
<div class="pm p" style="left:-1px;top:26px"></div>
<div class="hd" style="left:9px;top:30px;width:5px"></div>
<svg style="left:14px;top:21px" width="17" height="18" viewBox="0 0 17 18" ><path d="M0.500 6q0-2 2-2h1v9.500h10v-5h2.200v5.500q0 2.500-2.500 2.500h-10.200q-2.500 0-2.500-2.500z" fill="#e6b548" stroke="#a67514"/><path d="M1.500 6v8q0 1.500 1.500 1.500" fill="none" stroke="#f8e09a"/><path d="M3.500 1.500h6.500l3.500 3.500v9.500h-10z" fill="url(#sp)" stroke="#6c7c98"/><path d="M10 1.500v3.500h3.500" fill="#f6f6f8" stroke="#6c7c98" stroke-width="0.800"/><text x="8.400" y="12.300" text-anchor="middle" font-family="Liberation Sans,sans-serif" font-weight="bold" font-size="8.500" fill="#111" textLength="9" lengthAdjust="spacingAndGlyphs">ST</text></svg>
<span class="f" style="left:34.70px;top:20.50px;font-size:12px;line-height:18px;color:#000;transform:scaleX(1.0425);">LastPou</span>
<div class="pm p" style="left:-1px;top:46px"></div>
<div class="hd" style="left:9px;top:50px;width:5px"></div>
<svg style="left:14px;top:41px" width="17" height="18" viewBox="0 0 17 18" ><path d="M0.500 6q0-2 2-2h1v9.500h10v-5h2.200v5.500q0 2.500-2.500 2.500h-10.200q-2.500 0-2.500-2.500z" fill="#e6b548" stroke="#a67514"/><path d="M1.500 6v8q0 1.500 1.500 1.500" fill="none" stroke="#f8e09a"/><path d="M3.500 1.500h6.500l3.500 3.500v9.500h-10z" fill="url(#sp)" stroke="#6c7c98"/><path d="M10 1.500v3.500h3.500" fill="#f6f6f8" stroke="#6c7c98" stroke-width="0.800"/><text x="8.400" y="12.300" text-anchor="middle" font-family="Liberation Sans,sans-serif" font-weight="bold" font-size="8.500" fill="#111" textLength="9" lengthAdjust="spacingAndGlyphs">ST</text></svg>
<span class="f" style="left:35.10px;top:40.50px;font-size:12px;line-height:18px;color:#000;transform:scaleX(0.9665);">POU_01</span>
<div class="pm p" style="left:-1px;top:66px"></div>
<div class="hd" style="left:9px;top:70px;width:5px"></div>
<svg style="left:14px;top:61px" width="17" height="18" viewBox="0 0 17 18" ><path d="M0.500 6q0-2 2-2h1v9.500h10v-5h2.200v5.500q0 2.500-2.500 2.500h-10.200q-2.500 0-2.500-2.500z" fill="#e6b548" stroke="#a67514"/><path d="M1.500 6v8q0 1.500 1.500 1.500" fill="none" stroke="#f8e09a"/><path d="M3.500 1.500h6.500l3.500 3.500v9.500h-10z" fill="url(#sp)" stroke="#6c7c98"/><path d="M10 1.500v3.500h3.500" fill="#f6f6f8" stroke="#6c7c98" stroke-width="0.800"/><text x="8.400" y="12.300" text-anchor="middle" font-family="Liberation Sans,sans-serif" font-weight="bold" font-size="8.500" fill="#111" textLength="9" lengthAdjust="spacingAndGlyphs">ST</text></svg>
<span class="f" style="left:34.90px;top:60.50px;font-size:12px;line-height:18px;color:#000;transform:scaleX(1.0637);">Startup</span>
<div class="pm p" style="left:-1px;top:86px"></div>
<div class="hd" style="left:9px;top:90px;width:5px"></div>
<svg style="left:14px;top:81px" width="17" height="18" viewBox="0 0 17 18" ><path d="M0.500 6q0-2 2-2h1v9.500h10v-5h2.200v5.500q0 2.500-2.500 2.500h-10.200q-2.500 0-2.500-2.500z" fill="#e6b548" stroke="#a67514"/><path d="M1.500 6v8q0 1.500 1.500 1.500" fill="none" stroke="#f8e09a"/><path d="M3.500 1.500h6.500l3.500 3.500v9.500h-10z" fill="url(#sp)" stroke="#6c7c98"/><path d="M10 1.500v3.500h3.500" fill="#f6f6f8" stroke="#6c7c98" stroke-width="0.800"/><text x="8.400" y="12.300" text-anchor="middle" font-family="Liberation Sans,sans-serif" font-weight="bold" font-size="8.500" fill="#111" textLength="9" lengthAdjust="spacingAndGlyphs">ST</text></svg>
<span class="f" style="left:34.70px;top:81.60px;font-size:12px;line-height:18px;color:#000;transform:scaleX(0.9840);">XYZ位置检查</span>
<div class="pm p" style="left:-1px;top:106px"></div>
<div class="hd" style="left:9px;top:110px;width:5px"></div>
<svg style="left:14px;top:101px" width="17" height="18" viewBox="0 0 17 18" ><path d="M0.500 6q0-2 2-2h1v9.500h10v-5h2.200v5.500q0 2.500-2.500 2.500h-10.200q-2.500 0-2.500-2.500z" fill="#e6b548" stroke="#a67514"/><path d="M1.500 6v8q0 1.500 1.500 1.500" fill="none" stroke="#f8e09a"/><path d="M3.500 1.500h6.500l3.500 3.500v9.500h-10z" fill="url(#sp)" stroke="#6c7c98"/><path d="M10 1.500v3.500h3.500" fill="#f6f6f8" stroke="#6c7c98" stroke-width="0.800"/><text x="8.400" y="12.300" text-anchor="middle" font-family="Liberation Sans,sans-serif" font-weight="bold" font-size="8.500" fill="#111" textLength="9" lengthAdjust="spacingAndGlyphs">ST</text></svg>
<span class="f" style="left:34.70px;top:101.60px;font-size:12px;line-height:18px;color:#000;transform:scaleX(1.0055);">伺服定位控制</span>
<div class="pm " style="left:-1px;top:126px"></div>
<div class="hd" style="left:9px;top:130px;width:5px"></div>
<svg style="left:14px;top:121px" width="17" height="18" viewBox="0 0 17 18" ><path d="M0.500 6q0-2 2-2h1v9.500h10v-5h2.200v5.500q0 2.500-2.500 2.500h-10.200q-2.500 0-2.500-2.500z" fill="#e6b548" stroke="#a67514"/><path d="M1.500 6v8q0 1.500 1.500 1.500" fill="none" stroke="#f8e09a"/><path d="M3.500 1.500h6.500l3.500 3.500v9.500h-10z" fill="url(#sp)" stroke="#6c7c98"/><path d="M10 1.500v3.500h3.500" fill="#f6f6f8" stroke="#6c7c98" stroke-width="0.800"/><text x="8.400" y="12.300" text-anchor="middle" font-family="Liberation Sans,sans-serif" font-weight="bold" font-size="8.500" fill="#111" textLength="9" lengthAdjust="spacingAndGlyphs">ST</text></svg>
<span class="f" style="left:33.67px;top:121.60px;font-size:12px;line-height:18px;color:#000;transform:scaleX(1.0255);">台车控制</span>
<div class="hd" style="left:23px;top:150px;width:11px"></div>
<svg style="left:35px;top:143px" width="13" height="15" viewBox="0 0 13 15" ><path d="M0.500 0.500h8.500l3 3v11h-11.500z" fill="url(#sd)" stroke="#70707a"/><path d="M9 0.500v3h3" fill="#f4f4f6" stroke="#70707a" stroke-width="0.800"/><text x="6.200" y="11.800" text-anchor="middle" font-family="Liberation Sans,sans-serif" font-weight="bold" font-size="9.500" fill="#111" textLength="10" lengthAdjust="spacingAndGlyphs">ST</text></svg>
<div class="a" style="left:52px;top:140px;width:52px;height:20px;background:#f0f0f0"></div>
<span class="f" style="left:53.70px;top:141.60px;font-size:12px;line-height:18px;color:#000;transform:scaleX(1.0062);">程序本体</span>
<div class="hd" style="left:23px;top:170px;width:11px"></div>
<svg style="left:33px;top:162px" width="17" height="17" viewBox="0 0 17 17" ><path d="M1.500 1l7.500-1l1 11l-8 1.500z" fill="url(#lb)" stroke="#d4e2f4" stroke-width="0.600"/><rect x="4.500" y="6" width="11" height="9.500" fill="#fff" stroke="#4a4cf0" stroke-width="1.200"/><path d="M4.500 9.200h11M4.500 12.400h11M8.500 6v9.500" stroke="#4a4cf0" stroke-width="1"/><path d="M10 10.800h4" stroke="#9a9aa8" stroke-width="0.800"/></svg>
<span class="f" style="left:53.70px;top:161.60px;font-size:12px;line-height:18px;color:#000;transform:scaleX(1.0062);">局部标签</span>
<div class="pm p" style="left:-1px;top:186px"></div>
<div class="hd" style="left:9px;top:190px;width:5px"></div>
<svg style="left:14px;top:181px" width="17" height="18" viewBox="0 0 17 18" ><path d="M0.500 6q0-2 2-2h1v9.500h10v-5h2.200v5.500q0 2.500-2.500 2.500h-10.200q-2.500 0-2.500-2.500z" fill="#e6b548" stroke="#a67514"/><path d="M1.500 6v8q0 1.500 1.500 1.500" fill="none" stroke="#f8e09a"/><path d="M3.500 1.500h6.500l3.500 3.500v9.500h-10z" fill="url(#sp)" stroke="#6c7c98"/><path d="M10 1.500v3.500h3.500" fill="#f6f6f8" stroke="#6c7c98" stroke-width="0.800"/><text x="8.400" y="12.300" text-anchor="middle" font-family="Liberation Sans,sans-serif" font-weight="bold" font-size="8.500" fill="#111" textLength="9" lengthAdjust="spacingAndGlyphs">ST</text></svg>
<span class="f" style="left:33.67px;top:181.60px;font-size:12px;line-height:18px;color:#000;transform:scaleX(1.0255);">同步控制</span>
<div class="pm p" style="left:-1px;top:206px"></div>
<div class="hd" style="left:9px;top:210px;width:5px"></div>
<svg style="left:14px;top:201px" width="17" height="18" viewBox="0 0 17 18" ><path d="M0.500 6q0-2 2-2h1v9.500h10v-5h2.200v5.500q0 2.500-2.500 2.500h-10.200q-2.500 0-2.500-2.500z" fill="#e6b548" stroke="#a67514"/><path d="M1.500 6v8q0 1.500 1.500 1.500" fill="none" stroke="#f8e09a"/><path d="M3.500 1.500h6.500l3.500 3.500v9.500h-10z" fill="url(#sp)" stroke="#6c7c98"/><path d="M10 1.500v3.500h3.500" fill="#f6f6f8" stroke="#6c7c98" stroke-width="0.800"/><text x="8.400" y="12.300" text-anchor="middle" font-family="Liberation Sans,sans-serif" font-weight="bold" font-size="8.500" fill="#111" textLength="9" lengthAdjust="spacingAndGlyphs">ST</text></svg>
<span class="f" style="left:34.70px;top:201.60px;font-size:12px;line-height:18px;color:#000;">回原点控制</span>
<div class="pm p" style="left:-1px;top:226px"></div>
<div class="hd" style="left:9px;top:230px;width:5px"></div>
<svg style="left:14px;top:221px" width="17" height="18" viewBox="0 0 17 18" ><path d="M0.500 6q0-2 2-2h1v9.500h10v-5h2.200v5.500q0 2.500-2.500 2.500h-10.200q-2.500 0-2.500-2.500z" fill="#e6b548" stroke="#a67514"/><path d="M1.500 6v8q0 1.500 1.500 1.500" fill="none" stroke="#f8e09a"/><path d="M3.500 1.500h6.500l3.500 3.500v9.500h-10z" fill="url(#sp)" stroke="#6c7c98"/><path d="M10 1.500v3.500h3.500" fill="#f6f6f8" stroke="#6c7c98" stroke-width="0.800"/><text x="8.400" y="12.300" text-anchor="middle" font-family="Liberation Sans,sans-serif" font-weight="bold" font-size="8.500" fill="#111" textLength="9" lengthAdjust="spacingAndGlyphs">ST</text></svg>
<span class="f" style="left:34.70px;top:221.60px;font-size:12px;line-height:18px;color:#000;transform:scaleX(1.0042);">夹钳控制</span>
<div class="pm p" style="left:-1px;top:246px"></div>
<div class="hd" style="left:9px;top:250px;width:5px"></div>
<svg style="left:14px;top:241px" width="17" height="18" viewBox="0 0 17 18" ><path d="M0.500 6q0-2 2-2h1v9.500h10v-5h2.200v5.500q0 2.500-2.500 2.500h-10.200q-2.500 0-2.500-2.500z" fill="#e6b548" stroke="#a67514"/><path d="M1.500 6v8q0 1.500 1.500 1.500" fill="none" stroke="#f8e09a"/><path d="M3.500 1.500h6.500l3.500 3.500v9.500h-10z" fill="url(#sp)" stroke="#6c7c98"/><path d="M10 1.500v3.500h3.500" fill="#f6f6f8" stroke="#6c7c98" stroke-width="0.800"/><text x="8.400" y="12.300" text-anchor="middle" font-family="Liberation Sans,sans-serif" font-weight="bold" font-size="8.500" fill="#111" textLength="9" lengthAdjust="spacingAndGlyphs">ST</text></svg>
<span class="f" style="left:34.70px;top:241.60px;font-size:12px;line-height:18px;color:#000;transform:scaleX(1.0055);">安全信号检查</span>
<div class="pm p" style="left:-1px;top:266px"></div>
<div class="hd" style="left:9px;top:270px;width:5px"></div>
<svg style="left:14px;top:261px" width="17" height="18" viewBox="0 0 17 18" ><path d="M0.500 6q0-2 2-2h1v9.500h10v-5h2.200v5.500q0 2.500-2.500 2.500h-10.200q-2.500 0-2.500-2.500z" fill="#e6b548" stroke="#a67514"/><path d="M1.500 6v8q0 1.500 1.500 1.500" fill="none" stroke="#f8e09a"/><path d="M3.500 1.500h6.500l3.500 3.500v9.500h-10z" fill="url(#sp)" stroke="#6c7c98"/><path d="M10 1.500v3.500h3.500" fill="#f6f6f8" stroke="#6c7c98" stroke-width="0.800"/><text x="8.400" y="12.300" text-anchor="middle" font-family="Liberation Sans,sans-serif" font-weight="bold" font-size="8.500" fill="#111" textLength="9" lengthAdjust="spacingAndGlyphs">ST</text></svg>
<span class="f" style="left:34.70px;top:261.60px;font-size:12px;line-height:18px;color:#0000ff;">成品输送带</span>
<div class="pm p" style="left:-1px;top:286px"></div>
<div class="hd" style="left:9px;top:290px;width:5px"></div>
<svg style="left:14px;top:281px" width="17" height="18" viewBox="0 0 17 18" ><path d="M0.500 6q0-2 2-2h1v9.500h10v-5h2.200v5.500q0 2.500-2.500 2.500h-10.200q-2.500 0-2.500-2.500z" fill="#e6b548" stroke="#a67514"/><path d="M1.500 6v8q0 1.500 1.500 1.500" fill="none" stroke="#f8e09a"/><path d="M3.500 1.500h6.500l3.500 3.500v9.500h-10z" fill="url(#sp)" stroke="#6c7c98"/><path d="M10 1.500v3.500h3.500" fill="#f6f6f8" stroke="#6c7c98" stroke-width="0.800"/><text x="8.400" y="12.300" text-anchor="middle" font-family="Liberation Sans,sans-serif" font-weight="bold" font-size="8.500" fill="#111" textLength="9" lengthAdjust="spacingAndGlyphs">ST</text></svg>
<span class="f" style="left:34.70px;top:281.60px;font-size:12px;line-height:18px;color:#000;transform:scaleX(1.0042);">报警处理</span>
<div class="pm p" style="left:-1px;top:306px"></div>
<div class="hd" style="left:9px;top:310px;width:5px"></div>
<svg style="left:14px;top:301px" width="17" height="18" viewBox="0 0 17 18" ><path d="M0.500 6q0-2 2-2h1v9.500h10v-5h2.200v5.500q0 2.500-2.500 2.500h-10.200q-2.500 0-2.500-2.500z" fill="#e6b548" stroke="#a67514"/><path d="M1.500 6v8q0 1.500 1.500 1.500" fill="none" stroke="#f8e09a"/><path d="M3.500 1.500h6.500l3.500 3.500v9.500h-10z" fill="url(#sp)" stroke="#6c7c98"/><path d="M10 1.500v3.500h3.500" fill="#f6f6f8" stroke="#6c7c98" stroke-width="0.800"/><text x="8.400" y="12.300" text-anchor="middle" font-family="Liberation Sans,sans-serif" font-weight="bold" font-size="8.500" fill="#111" textLength="9" lengthAdjust="spacingAndGlyphs">ST</text></svg>
<span class="f" style="left:34.70px;top:301.60px;font-size:12px;line-height:18px;color:#000;transform:scaleX(1.0042);">拆垛控制</span>
<div class="pm p" style="left:-1px;top:326px"></div>
<div class="hd" style="left:9px;top:330px;width:5px"></div>
<svg style="left:14px;top:321px" width="17" height="18" viewBox="0 0 17 18" ><path d="M0.500 6q0-2 2-2h1v9.500h10v-5h2.200v5.500q0 2.500-2.500 2.500h-10.200q-2.500 0-2.500-2.500z" fill="#e6b548" stroke="#a67514"/><path d="M1.500 6v8q0 1.500 1.500 1.500" fill="none" stroke="#f8e09a"/><path d="M3.500 1.500h6.500l3.500 3.500v9.500h-10z" fill="url(#sp)" stroke="#6c7c98"/><path d="M10 1.500v3.500h3.500" fill="#f6f6f8" stroke="#6c7c98" stroke-width="0.800"/><text x="8.400" y="12.300" text-anchor="middle" font-family="Liberation Sans,sans-serif" font-weight="bold" font-size="8.500" fill="#111" textLength="9" lengthAdjust="spacingAndGlyphs">ST</text></svg>
<span class="f" style="left:34.70px;top:321.60px;font-size:12px;line-height:18px;color:#000;transform:scaleX(1.0042);">拍打控制</span>
<div class="pm " style="left:-1px;top:346px"></div>
<div class="hd" style="left:9px;top:350px;width:5px"></div>
<svg style="left:14px;top:341px" width="17" height="18" viewBox="0 0 17 18" ><path d="M0.500 6q0-2 2-2h1v9.500h10v-5h2.200v5.500q0 2.500-2.500 2.500h-10.200q-2.500 0-2.500-2.500z" fill="#e6b548" stroke="#a67514"/><path d="M1.500 6v8q0 1.500 1.500 1.500" fill="none" stroke="#f8e09a"/><path d="M3.500 1.500h6.500l3.500 3.500v9.500h-10z" fill="url(#sp)" stroke="#6c7c98"/><path d="M10 1.500v3.500h3.500" fill="#f6f6f8" stroke="#6c7c98" stroke-width="0.800"/><text x="8.400" y="12.300" text-anchor="middle" font-family="Liberation Sans,sans-serif" font-weight="bold" font-size="8.500" fill="#111" textLength="9" lengthAdjust="spacingAndGlyphs">ST</text></svg>
<span class="f" style="left:34.70px;top:341.60px;font-size:12px;line-height:18px;color:#000;transform:scaleX(1.0055);">控制模式选择</span>
<div class="hd" style="left:23px;top:370px;width:11px"></div>
<svg style="left:35px;top:363px" width="13" height="15" viewBox="0 0 13 15" ><path d="M0.500 0.500h8.500l3 3v11h-11.500z" fill="url(#sd)" stroke="#70707a"/><path d="M9 0.500v3h3" fill="#f4f4f6" stroke="#70707a" stroke-width="0.800"/><text x="6.200" y="11.800" text-anchor="middle" font-family="Liberation Sans,sans-serif" font-weight="bold" font-size="9.500" fill="#111" textLength="10" lengthAdjust="spacingAndGlyphs">ST</text></svg>
<span class="f" style="left:53.70px;top:361.60px;font-size:12px;line-height:18px;color:#000;transform:scaleX(1.0062);">程序本体</span>
<div class="hd" style="left:23px;top:390px;width:11px"></div>
<svg style="left:33px;top:382px" width="17" height="17" viewBox="0 0 17 17" ><path d="M1.500 1l7.500-1l1 11l-8 1.500z" fill="url(#lb)" stroke="#d4e2f4" stroke-width="0.600"/><rect x="4.500" y="6" width="11" height="9.500" fill="#fff" stroke="#4a4cf0" stroke-width="1.200"/><path d="M4.500 9.200h11M4.500 12.400h11M8.500 6v9.500" stroke="#4a4cf0" stroke-width="1"/><path d="M10 10.800h4" stroke="#9a9aa8" stroke-width="0.800"/></svg>
<span class="f" style="left:53.70px;top:381.60px;font-size:12px;line-height:18px;color:#000;transform:scaleX(1.0062);">局部标签</span>
<div class="vd" style="left:22px;top:130px;height:40px"></div><div class="vd" style="left:22px;top:350px;height:40px"></div>
<div class="a" style="left:172px;top:0;width:17px;height:389px;background:#f0f0f0"></div>
<svg style="left:177px;top:6px" width="7" height="4"><path d="M0 4l3.5-4l3.5 4z" fill="#505050"/></svg>
<svg style="left:177px;top:378px" width="7" height="4"><path d="M0 0h7l-3.5 4z" fill="#505050"/></svg>
<div class="a" style="left:173px;top:113px;width:15px;height:147px;border:1px solid #979797;border-radius:2px;background:linear-gradient(90deg,#f6f6f6,#e2e2e2 50%,#cfcfcf)"></div>
<div class="a" style="left:177px;top:183px;width:7px;height:7px;background:repeating-linear-gradient(#6b6b6b 0 1px,transparent 1px 2px)"></div>
</div>
<div class="a" style="left:0;top:556px;width:189px;height:7px;background:linear-gradient(#a6a6c4,#8686ac)"></div>
<div class="a" style="left:54px;top:557px;width:35px;height:2px;background:repeating-linear-gradient(90deg,#26265c 0 2px,transparent 2px 4px)"></div>
<div class="a" style="left:55px;top:558px;width:35px;height:2px;background:repeating-linear-gradient(90deg,transparent 0 1px,#fff 1px 2px,transparent 2px 4px)"></div>
<div class="a" style="left:0;top:563px;width:189px;height:32px;background:linear-gradient(#fbe597 0%,#fad678 35%,#f6bb4c 65%,#ee9a20 100%)"></div>
<div class="a" style="left:0;top:594px;width:189px;height:1px;background:#8c8cb0"></div>
<div class="a lav" style="left:0;top:595px;width:189px;height:31px"></div>
<div class="a" style="left:0;top:626px;width:189px;height:1px;background:#8c8cb0"></div>
<div class="a lav" style="left:0;top:627px;width:189px;height:31px"></div>
<span class="f" style="left:-8.50px;top:570.10px;font-size:12px;line-height:18px;color:#000;font-weight:bold;transform:scaleX(0.9625);">工程</span>
<span class="f" style="left:-7.50px;top:602.10px;font-size:12px;line-height:18px;color:#000;font-weight:bold;transform:scaleX(0.9583);">用户库</span>
<span class="f" style="left:-7.50px;top:634.60px;font-size:12px;line-height:18px;color:#000;font-weight:bold;transform:scaleX(0.9687);">连接目标</span>
<div class="a" style="left:188px;top:89px;width:1px;height:550px;background:#9c9cbc"></div>
<div class="a" style="left:189px;top:89px;width:4px;height:550px;background:linear-gradient(90deg,#c8c8dc,#e4e4f0)"></div>
<div class="a" style="left:193px;top:89px;width:764px;height:26px;background:#e7e7f1"></div>
<svg style="left:193px;top:90px;overflow:hidden" width="764" height="27" viewBox="193 90 764 27"><path d="M180 114.500V92.500H251.500q3 0 3 3V114.500z" fill="url(#tg)"/><path d="M180 92.500H251.500q3 0 3 3" fill="none" stroke="#2450b4"/><path d="M254.5 114.500V96l5-3.500H390.5q3 0 3 3V114.500z" fill="url(#tg)"/><path d="M254.5 114.500V96l5-3.500H390.5q3 0 3 3" fill="none" stroke="#2450b4"/><path d="M393.5 114.500V96l5-3.500H613q3 0 3 3V114.500z" fill="url(#tg)"/><path d="M393.5 114.500V96l5-3.500H613q3 0 3 3" fill="none" stroke="#2450b4"/><path d="M834.5 114.500V96l5-3.500H987q3 0 3 3V114.500z" fill="url(#tg)"/><path d="M834.5 114.500V96l5-3.500H987q3 0 3 3" fill="none" stroke="#2450b4"/><path d="M193 114.500H596.500M834.500 114.500H957" stroke="#2450b4"/><path d="M193 117V115H596L615 95l5.500-2.500H831.500q3 0 3 3V115H957V117z" fill="url(#og)"/><path d="M598 114.500L616 95.500l5-2H832" fill="none" stroke="#fff" stroke-opacity="0.800"/><path d="M596.300 115L615 95l5.500-2.500H831.500q3 0 3 3V114.500" fill="none" stroke="#2450b4" stroke-width="1"/><path d="M833.500 96V114" stroke="#fff" stroke-opacity="0.600"/><rect x="193" y="115" width="764" height="2" fill="#f9bd6e"/></svg>
<svg style="left:262px;top:96px" width="18" height="18" viewBox="0 0 18 18" ><circle cx="7" cy="7" r="6.700" fill="url(#gl)"/><path d="M3 3.500q3-2 4 0.500t3 1q1 2-1.500 3.500t-3 0.500t-2.500-2.500z" fill="#48b038"/><path d="M2 9q2 0 3 2l-1 1.500z" fill="#48b038"/><rect x="5.500" y="6.500" width="11" height="9.500" fill="#fff" stroke="#4446ee" stroke-width="1.200"/><path d="M5.500 9.700h11M5.500 12.900h11M9.300 6.500v9.500" stroke="#4446ee" stroke-width="1"/><path d="M11 11.300h4" stroke="#9a9aa8" stroke-width="0.800"/></svg>
<svg style="left:404px;top:97px" width="13" height="15" viewBox="0 0 13 15" ><path d="M0.500 0.500h8.500l3 3v11h-11.500z" fill="url(#sd)" stroke="#70707a"/><path d="M9 0.500v3h3" fill="#f4f4f6" stroke="#70707a" stroke-width="0.800"/><text x="6.200" y="11.800" text-anchor="middle" font-family="Liberation Sans,sans-serif" font-weight="bold" font-size="9.500" fill="#111" textLength="10" lengthAdjust="spacingAndGlyphs">ST</text></svg>
<svg style="left:625px;top:97px" width="13" height="15" viewBox="0 0 13 15" ><path d="M0.500 0.500h8.500l3 3v11h-11.500z" fill="url(#sd)" stroke="#70707a"/><path d="M9 0.500v3h3" fill="#f4f4f6" stroke="#70707a" stroke-width="0.800"/><text x="6.200" y="11.800" text-anchor="middle" font-family="Liberation Sans,sans-serif" font-weight="bold" font-size="9.500" fill="#111" textLength="10" lengthAdjust="spacingAndGlyphs">ST</text></svg>
<svg style="left:845px;top:97px" width="13" height="15" viewBox="0 0 13 15" ><path d="M0.500 0.500h8.500l3 3v11h-11.500z" fill="url(#sd)" stroke="#70707a"/><path d="M9 0.500v3h3" fill="#f4f4f6" stroke="#70707a" stroke-width="0.800"/><text x="6.200" y="11.800" text-anchor="middle" font-family="Liberation Sans,sans-serif" font-weight="bold" font-size="9.500" fill="#111" textLength="10" lengthAdjust="spacingAndGlyphs">ST</text></svg>
<div class="a" style="left:193px;top:93px;width:60px;height:21px;overflow:hidden"><span class="f" style="left:-7.00px;top:2.60px;font-size:12px;line-height:18px;color:#000;transform:scaleX(1.0673);">设置 IO表</span></div>
<span class="f" style="left:281.50px;top:95.60px;font-size:12px;line-height:18px;color:#000;transform:scaleX(1.0067);">全局标签设置 报警</span>
<span class="f" style="left:422.30px;top:95.60px;font-size:12px;line-height:18px;color:#000;transform:scaleX(1.0075);">控制模式选择 [PRG] 程序本体 [S..</span>
<span class="f" style="left:641.28px;top:95.60px;font-size:12px;line-height:18px;color:#000;font-weight:bold;transform:scaleX(1.0220);">台车控制 [PRG] 程序本体 [S...</span>
<span class="f" style="left:862.20px;top:95.60px;font-size:12px;line-height:18px;color:#000;">伺服定位控制 [PRG] 程序本体</span>
<div class="a" style="left:814px;top:95px;width:17px;height:16px;border:1px solid #e2d8b8;border-right:1.500px solid #cbbf9e;border-radius:1px;background:#fffcf0"></div>
<svg style="left:817.500px;top:98.500px" width="9" height="9"><path d="M1 1l7 7M8 1l-7 7" stroke="#a5957c" stroke-width="2.200"/></svg>
<div class="a" style="left:193px;top:115px;width:770px;height:530px;border-left:1px solid #2450b4;background:#ffffc0"></div>
<div class="a" style="left:194px;top:115px;width:770px;height:530px;border:2px solid #f7bd6a"></div>
<div class="a" style="left:196px;top:117px;width:770px;height:530px;border-left:1px solid #767676;border-top:1px solid #767676"></div>
<div class="a" style="left:197px;top:118px;width:19.5px;height:530px;background:#f0f0f0"></div>
<span class="t" style="left:233.40px;top:117px;color:#ff00ff;font-size:15px;transform:scaleX(0.9693)">TrolleyAReady</span>
<span class="t" style="left:329.40px;top:117px;color:#000000;font-size:15px;transform:scaleX(0.9040)">:=</span>
<span class="t" style="left:341.96px;top:117px;color:#0000ff;font-size:15px;transform:scaleX(0.8405)">FALSE</span>
<span class="t" style="left:382.00px;top:117px;color:#000000;font-size:15px;transform:scaleX(1.0000)">;</span>
<span class="t" style="left:233.90px;top:139px;color:#ff00ff;font-size:15px;transform:scaleX(0.9989)">wTrolleyAAutoRunStep</span>
<span class="t" style="left:388.28px;top:139px;color:#000000;font-size:15px;transform:scaleX(1.0185)">:=0;</span>
<span class="t" style="left:216.53px;top:161px;color:#0000ff;font-size:15px;transform:scaleX(0.8701)">END_IF</span>
<span class="t" style="left:263.80px;top:161px;color:#000000;font-size:15px;transform:scaleX(1.0000)">;</span>
<span class="t" style="left:217.40px;top:183px;color:#ff00ff;font-size:15px;transform:scaleX(1.0203)">bTrolleyAAutoRunOld</span>
<span class="t" style="left:365.10px;top:183px;color:#000000;font-size:15px;transform:scaleX(0.9040)">:=</span>
<span class="t" style="left:378.20px;top:183px;color:#ff00ff;font-size:15px;transform:scaleX(1.0097)">bTrolleyAAutoRun</span>
<span class="t" style="left:501.90px;top:183px;color:#000000;font-size:15px;transform:scaleX(1.0000)">;</span>
<span class="t" style="left:216.43px;top:227px;color:#0000ff;font-size:15px;transform:scaleX(0.8712)">IF</span>
<span class="t" style="left:232.60px;top:227px;color:#ff00ff;font-size:15px;transform:scaleX(1.0138)">bTrolleyAAutoRun</span>
<span class="t" style="left:361.10px;top:227px;color:#0000ff;font-size:15px;transform:scaleX(0.9025)">THEN</span>
<span class="t" style="left:233.40px;top:249px;color:#0000ff;font-size:15px;transform:scaleX(0.8178)">CASE</span>
<span class="t" style="left:273.20px;top:249px;color:#ff00ff;font-size:15px;transform:scaleX(0.9995)">wTrolleyAAutoRunStep</span>
<span class="t" style="left:432.40px;top:249px;color:#0000ff;font-size:15px;transform:scaleX(0.8564)">OF</span>
<span class="t" style="left:233.03px;top:271px;color:#000000;font-size:15px;transform:scaleX(0.9694)">100:</span>
<span class="t" style="left:248.43px;top:293px;color:#0000ff;font-size:15px;transform:scaleX(0.8712)">IF</span>
<span class="t" style="left:264.17px;top:293px;color:#000000;font-size:15px;transform:scaleX(0.9311)">NOT</span>
<span class="t" style="left:297.68px;top:293px;color:#ff00ff;font-size:15px;transform:scaleX(1.0225)">iTrolleyAMaterial1</span>
<span class="t" style="left:425.60px;top:293px;color:#000000;font-size:15px;transform:scaleX(0.9643)">AND</span>
<span class="t" style="left:461.37px;top:293px;color:#000000;font-size:15px;transform:scaleX(0.9279)">NOT</span>
<span class="t" style="left:494.97px;top:293px;color:#ff00ff;font-size:15px;transform:scaleX(1.0259)">iTrolleyAMaterial2</span>
<span class="t" style="left:622.90px;top:293px;color:#0000ff;font-size:15px;transform:scaleX(0.9025)">THEN</span>
<span class="t" style="left:265.90px;top:315px;color:#ff00ff;font-size:15px;transform:scaleX(0.9989)">wTrolleyAAutoRunStep</span>
<span class="t" style="left:420.42px;top:315px;color:#000000;font-size:15px;transform:scaleX(0.9836)">:=800;</span>
<span class="t" style="left:462.60px;top:315px;color:#008000;font-size:15px;transform:scaleX(0.8004)">(*</span>
<span class="t" style="left:471.40px;top:315px;color:#008000;font-size:14px;transform:scaleX(1.0000)">无料台车退出程序</span>
<span class="t" style="left:584.20px;top:315px;color:#008000;font-size:15px;transform:scaleX(0.9504)">*)</span>
<span class="t" style="left:248.69px;top:337px;color:#0000ff;font-size:15px;transform:scaleX(0.8144)">ELSIF</span>
<span class="t" style="left:286.69px;top:337px;color:#ff00ff;font-size:15px;transform:scaleX(1.0097)">iTrolleyAFrontLimit</span>
<span class="t" style="left:418.20px;top:337px;color:#000000;font-size:15px;transform:scaleX(0.8426)">OR</span>
<span class="t" style="left:442.09px;top:337px;color:#000000;font-size:15px;transform:scaleX(0.9148)">NOT</span>
<span class="t" style="left:476.30px;top:337px;color:#ff00ff;font-size:15px;transform:scaleX(0.9812)">TrolleyANearAscendPos</span>
<span class="t" style="left:641.30px;top:337px;color:#0000ff;font-size:15px;transform:scaleX(0.9025)">THEN</span>
<span class="t" style="left:265.90px;top:359px;color:#ff00ff;font-size:15px;transform:scaleX(0.9989)">wTrolleyAAutoRunStep</span>
<span class="t" style="left:420.42px;top:359px;color:#000000;font-size:15px;transform:scaleX(0.9836)">:=150;</span>
<span class="t" style="left:462.60px;top:359px;color:#008000;font-size:15px;transform:scaleX(0.8004)">(*</span>
<span class="t" style="left:471.40px;top:359px;color:#008000;font-size:14px;transform:scaleX(1.0000)">有料但是不在前限位</span>
<span class="t" style="left:598.20px;top:359px;color:#008000;font-size:15px;transform:scaleX(0.9227)">*)</span>
<span class="t" style="left:248.71px;top:381px;color:#0000ff;font-size:15px;transform:scaleX(0.7925)">ELSE</span>
<span class="t" style="left:265.90px;top:403px;color:#ff00ff;font-size:15px;transform:scaleX(0.9989)">wTrolleyAAutoRunStep</span>
<span class="t" style="left:420.42px;top:403px;color:#000000;font-size:15px;transform:scaleX(0.9836)">:=400;</span>
<span class="t" style="left:462.60px;top:403px;color:#008000;font-size:15px;transform:scaleX(0.8004)">(*</span>
<span class="t" style="left:471.40px;top:403px;color:#008000;font-size:14px;transform:scaleX(1.0000)">有料在前限位，磁力分张前进</span>
<span class="t" style="left:654.20px;top:403px;color:#008000;font-size:15px;transform:scaleX(0.9689)">*)</span>
<span class="t" style="left:248.63px;top:425px;color:#0000ff;font-size:15px;transform:scaleX(0.8662)">END_IF</span>
<span class="t" style="left:295.70px;top:425px;color:#000000;font-size:15px;transform:scaleX(1.0000)">;</span>
<span class="t" style="left:233.05px;top:469px;color:#000000;font-size:15px;transform:scaleX(0.9546)">150:</span>
<span class="t" style="left:248.61px;top:491px;color:#ff00ff;font-size:15px;transform:scaleX(0.9948)">K2bMgtcSeparateAForward</span>
<span class="t" style="left:432.82px;top:491px;color:#000000;font-size:15px;transform:scaleX(0.9798)">:=0;</span>
<span class="t" style="left:248.60px;top:513px;color:#ff00ff;font-size:15px;transform:scaleX(0.9959)">K2bMgtcSeparateABackward</span>
<span class="t" style="left:443.87px;top:513px;color:#000000;font-size:15px;transform:scaleX(0.9334)">:=16#FF;</span>
<span class="t" style="left:248.43px;top:535px;color:#0000ff;font-size:15px;transform:scaleX(0.8712)">IF</span>
<span class="t" style="left:265.10px;top:535px;color:#ff00ff;font-size:15px;transform:scaleX(0.9879)">bMgtcSeparateARearLimit</span>
<span class="t" style="left:444.90px;top:535px;color:#0000ff;font-size:15px;transform:scaleX(0.9150)">THEN</span>
<span class="t" style="left:265.80px;top:557px;color:#008000;font-size:15px;transform:scaleX(0.9860)">(*K2bMgtcSeparateABackward:=0;</span>
<span class="t" style="left:495.20px;top:557px;color:#008000;font-size:14px;transform:scaleX(1.0000)">不是带锁气缸，不需要</span>
<span class="t" style="left:636.00px;top:557px;color:#008000;font-size:15px;transform:scaleX(0.9504)">*)</span>
<span class="t" style="left:265.90px;top:579px;color:#ff00ff;font-size:15px;transform:scaleX(0.9989)">wTrolleyAAutoRunStep</span>
<span class="t" style="left:420.41px;top:579px;color:#000000;font-size:15px;transform:scaleX(0.9861)">:=200;</span>
<span class="t" style="left:248.63px;top:601px;color:#0000ff;font-size:15px;transform:scaleX(0.8662)">END_IF</span>
<span class="t" style="left:295.70px;top:601px;color:#000000;font-size:15px;transform:scaleX(1.0000)">;</span>
</body></html>
